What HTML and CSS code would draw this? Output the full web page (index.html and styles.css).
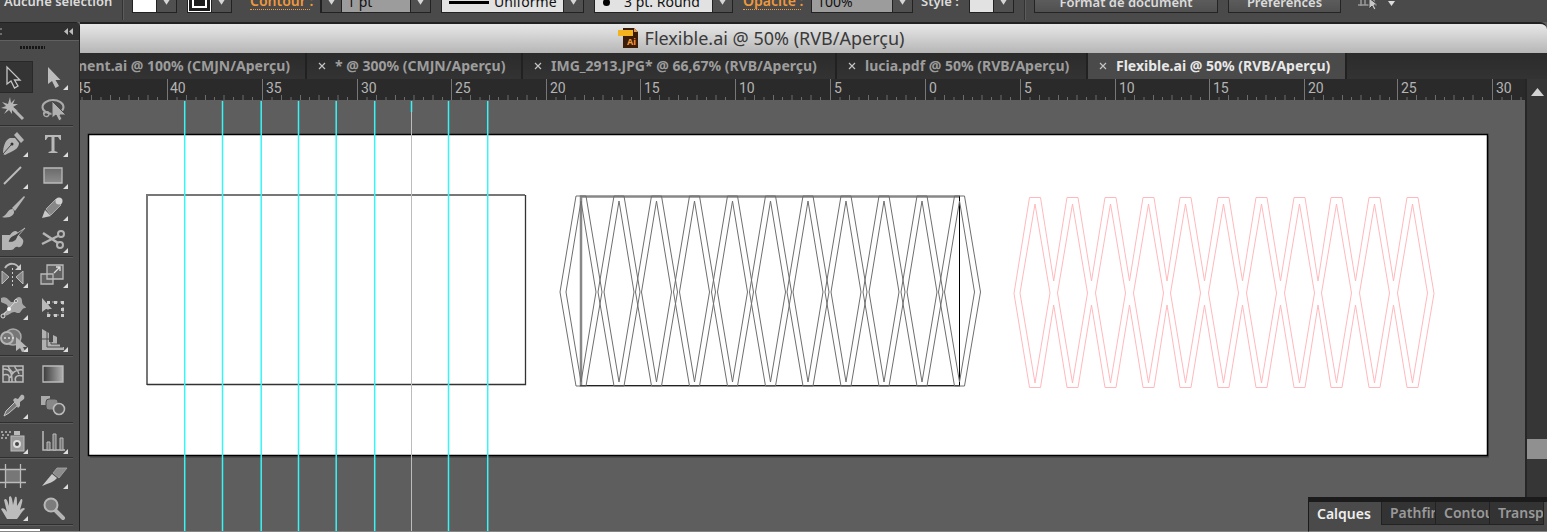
FILE: index.html
```html
<!DOCTYPE html>
<html lang="fr">
<head>
<meta charset="utf-8">
<title>Flexible.ai @ 50% (RVB/Aperçu)</title>
<link rel="stylesheet" href="styles.css">
</head>
<body>
<svg class="defs" aria-hidden="true">
  <defs>
    <linearGradient id="metal" x1="0" y1="0" x2="0" y2="1"><stop offset="0" stop-color="#6a6a6a"/><stop offset="1" stop-color="#8c8c8c"/></linearGradient>
    <linearGradient id="fade"><stop offset="0" stop-color="#3a3a3a"/><stop offset="1" stop-color="#b0b0b0"/></linearGradient>
    <symbol id="down" viewBox="0 0 8 6"><path d="M0 0h8L4 6z" fill="#d6d6d6"/></symbol>
    <symbol id="close" viewBox="0 0 8 8"><path d="M1 1l6 6M7 1L1 7" stroke="#c4c4c4" stroke-width="1.2"/></symbol>
    <path id="more" d="M35 24v5h-5z" fill="#ddd"/>
    <g id="diamond">
      <path d="M-5 -96H5L21 0L5 94H-5L-21 0Z"/>
      <path d="M0 -91L15 0L0 90L-15 0Z"/>
    </g>
    <path id="hole" d="M0 -89L15 0L0 90L-15 0Z"/>
    <g id="segment" stroke="#6c6c6c">
      <path d="M.5 0V21" stroke="#777"/>
      <path d="M10 18v3M19.500 16v5M29 18v3M38.500 16v5M47.500 18v3M57 16v5M66.500 18v3M76 16v5M85.500 18v3"/>
    </g>
  </defs>
</svg>
<div class="app">
  <header class="options">
    <span class="caption selection">Aucune sélection</span>
    <i class="rule"></i>
    <button class="swatch" aria-label="Fond"><span class="chip white"></span><svg class="arrow"><use href="#down"/></svg></button>
    <button class="swatch" aria-label="Contour"><span class="chip stroke"><i></i></span><svg class="arrow"><use href="#down"/></svg></button>
    <a class="link contour" href="#contour">Contour :</a>
    <div class="combo weight"><button class="step" aria-label="Diminuer"><svg class="arrow"><use href="#down"/></svg></button><select aria-label="Épaisseur"><option>1 pt</option></select><svg class="arrow"><use href="#down"/></svg></div>
    <div class="combo profile"><i class="bar"></i><select aria-label="Profil"><option>Uniforme</option></select><svg class="arrow"><use href="#down"/></svg></div>
    <div class="combo brush"><i class="dot"></i><select aria-label="Forme"><option>3 pt. Round</option></select><svg class="arrow"><use href="#down"/></svg></div>
    <a class="link opacity" href="#opacite">Opacité :</a>
    <div class="combo percent"><select aria-label="Opacité"><option>100%</option></select><svg class="arrow"><use href="#down"/></svg></div>
    <span class="caption style">Style :</span>
    <button class="swatch" aria-label="Style"><span class="chip pale"></span><svg class="arrow"><use href="#down"/></svg></button>
    <i class="rule"></i>
    <button class="push format">Format de document</button>
    <button class="push prefs">Préférences</button>
    <button class="similar" aria-label="Objets similaires"><svg width="50" height="22" viewBox="0 0 50 22"><path d="M10 3v12M14 8v6h9V8M7 14h19" fill="none" stroke="#999" stroke-width="1.500"/><path d="M18 7v11l3-3 2 4 2-1-2-4h4z" fill="#c8c8c8" stroke="#444"/><path d="M37 10h7l-3.500 5z" fill="#ddd"/></svg></button>
  </header>

  <div class="work">
    <aside class="tools">
      <div class="tools-head"><svg width="80" height="17"><path d="M0 6h2M0 11h2" stroke="#aaa"/><path d="M68 5v7l-4-3.500zM73 5v7l-4-3.500z" fill="#bbb"/></svg></div>
      <div class="grip"></div>
      <div class="group">
        <button aria-label="Sélection" class="on"><svg viewBox="0 0 40 32"><path d="M14 6V23l4-3 3.500 7 3.500-2-3.500-6h5.500z" fill="#333" stroke="#c4c4c4" stroke-width="1.300"/></svg></button>
        <button aria-label="Sélection directe"><svg viewBox="0 0 40 32"><path d="M15 6v17l4-3 3.500 7 3.500-2-3.500-6h5z" fill="#bcbcbc"/><use href="#more"/></svg></button>
        <button aria-label="Baguette magique"><svg viewBox="0 0 40 32"><path d="M17 4l1 6 4-4-2 5 5 0-5 3 5 4-6-2 0 5-3-4-5 4 3-5-6-1 5-2-4-4 6 2z" fill="#b5b5b5"/><path d="M19 15l11 11" stroke="#b5b5b5" stroke-width="3"/></svg></button>
        <button aria-label="Lasso"><svg viewBox="0 0 40 32"><ellipse cx="20" cy="14" rx="10.500" ry="7" fill="none" stroke="#aaa" stroke-width="2"/><path d="M19 8v17l4-3 3 6 3-2-2-4h6z" fill="#b0b0b0" stroke="#4a4a4a"/><path d="M11 19c-2 5 5 6 5 2s-4-2-5 0" fill="none" stroke="#aaa" stroke-width="1.500"/></svg></button>
      </div>
      <div class="group">
        <button aria-label="Plume"><svg viewBox="0 0 40 32"><path d="M10 26c0-7 2-14 7-16l5 0 4 5c0 6-6 8-14 12z" fill="#b4b4b4"/><path d="M21 7l3-3 7 8-3 3z" fill="#b4b4b4"/><path d="M10 26l8-9" stroke="#444"/><circle cx="19" cy="16" r="1.500" fill="#333"/><use href="#more"/></svg></button>
        <button aria-label="Texte"><svg viewBox="0 0 40 32"><path d="M12 7h16v5h-1l-2-3h-3.500v14l3 1v1h-9v-1l3-1V9H15l-2 3h-1z" fill="#b8b8b8"/><use href="#more"/></svg></button>
        <button aria-label="Trait"><svg viewBox="0 0 40 32"><path d="M11 24L28 7" stroke="#bbb" stroke-width="2"/><use href="#more"/></svg></button>
        <button aria-label="Rectangle"><svg viewBox="0 0 40 32"><path d="M11 8h18v15H11z" fill="url(#metal)" stroke="#bbb" stroke-width="1.300"/><use href="#more"/></svg></button>
        <button aria-label="Pinceau"><svg viewBox="0 0 40 32"><path d="M19 16L31 4l1 1-10 14z" fill="#b4b4b4"/><path d="M20 17c4 6-4 10-11 8 5-1 5-8 11-8z" fill="#b4b4b4"/></svg></button>
        <button aria-label="Crayon"><svg viewBox="0 0 40 32"><path d="M9 26l3-8 6 6z" fill="#c9c9c9"/><path d="M13 17l10-10 5 6-10 10z" fill="#888" stroke="#aaa"/><circle cx="26" cy="9" r="3.500" fill="#d0d0d0"/><use href="#more"/></svg></button>
        <button aria-label="Forme de tache"><svg viewBox="0 0 40 32"><path d="M9 11h8c3-5 7-5 8-2 0 4 7 5 5 10-1 4-4 5-5 4-4-1-3 3-7 3H9z" fill="#b4b4b4"/><path d="M15 18c2-6 5-6 8-8l9-6-7 8c-2 6-6 7-10 6z" fill="#444" stroke="#c4c4c4" stroke-width=".8"/></svg></button>
        <button aria-label="Ciseaux"><svg viewBox="0 0 40 32"><circle cx="28" cy="10" r="3" fill="none" stroke="#b4b4b4" stroke-width="2"/><circle cx="27" cy="21" r="3" fill="none" stroke="#b4b4b4" stroke-width="2"/><path d="M10 9l15 10M9 20l16-8" stroke="#b4b4b4" stroke-width="2.500"/><use href="#more"/></svg></button>
      </div>
      <div class="group">
        <button aria-label="Miroir"><svg viewBox="0 0 40 32"><path d="M9 12l7 6-7 7zM30 12l-7 6 7 7z" fill="#858585" stroke="#bbb"/><path d="M19.500 9v18" stroke="#ccc" stroke-dasharray="2 2"/><path d="M12 9c4-6 11-5 14 0" fill="none" stroke="#bbb" stroke-width="2"/><path d="M28 5v6h-6z" fill="#ccc"/><use href="#more"/></svg></button>
        <button aria-label="Échelle"><svg viewBox="0 0 40 32"><path d="M14 6h16v14H14zM8 15h12v10H8z" fill="#777" fill-opacity=".5" stroke="#bbb" stroke-width="1.300"/><path d="M21 14l6-6M23 8h4v4" fill="none" stroke="#ddd" stroke-width="1.300"/><use href="#more"/></svg></button>
        <button aria-label="Largeur"><svg viewBox="0 0 40 32"><path d="M8 7c8-4 9 9 14 2 3-5 7-3 7 1 0 5 3 4 4 7-5-1-4 6-9 5-6-4-8 6-14 1 2-3 5-2 5-6s-3-4-7-6z" fill="#a6a6a6"/><path d="M9 25L23 10" stroke="#ddd"/><circle cx="10" cy="25" r="2" fill="#555" stroke="#ddd"/><circle cx="16" cy="18" r="2" fill="#fff"/><circle cx="23" cy="10" r="1.500" fill="#555" stroke="#ddd"/><use href="#more"/></svg></button>
        <button aria-label="Transformation"><svg viewBox="0 0 40 32"><path d="M15 11h15v13H15z" fill="none" stroke="#aaa" stroke-dasharray="2 2"/><path d="M14 10h3v3h-3zM21 10h3v3h-3zM28 10h3v3h-3zM28 17h3v3h-3zM28 23h3v3h-3zM21 23h3v3h-3zM14 23h3v3h-3z" fill="#ccc"/><path d="M9 7v14l4-3h6z" fill="#b8b8b8"/></svg></button>
        <button aria-label="Concepteur de forme"><svg viewBox="0 0 40 32"><circle cx="20" cy="14" r="8" fill="#777" stroke="#aaa" stroke-width="1.500"/><circle cx="14" cy="15" r="6" fill="#777" stroke="#b4b4b4" stroke-width="2"/><path d="M11 15h11" stroke="#ddd" stroke-width="1.500" stroke-dasharray="2 2"/><path d="M23 14v14l4-3 2 4 3-1-2-4h4z" fill="#b8b8b8"/><use href="#more"/></svg></button>
        <button aria-label="Grille de perspective"><svg viewBox="0 0 40 32"><path d="M9 6l7 4v9h4v-7l4 2v7h3v3h4v3H9z" fill="#b0b0b0"/><path d="M14 8v16h16M18 10v11h10M9 16h11" stroke="#4a4a4a" fill="none"/><use href="#more"/></svg></button>
      </div>
      <div class="group">
        <button aria-label="Filet"><svg viewBox="0 0 40 32"><path d="M10 8h20v16H10z" fill="#555" stroke="#bbb" stroke-width="1.500"/><path d="M10 11c9 0 9 6 9 13M10 17c8-2 6 3 6 7M30 12c-9-1-11 4-13 8M30 18c-7-2-9 2-7 6M15 8c1 4 4 5 5 7M22 8c-1 3 3 3 4 8" fill="none" stroke="#bbb" stroke-width="1.500"/></svg></button>
        <button aria-label="Dégradé de couleurs"><svg viewBox="0 0 40 32"><path d="M10 8h20v16H10z" fill="url(#fade)" stroke="#bbb" stroke-width="1.300"/></svg></button>
        <button aria-label="Pipette"><svg viewBox="0 0 40 32"><path d="M11 26l2-5 9-9 3 3-9 8z" fill="#777" stroke="#c4c4c4"/><path d="M20 10l2-2 3 1 3-4c3-1 4 2 3 4l-4 3 0 4-2 2z" fill="#b4b4b4"/><use href="#more"/></svg></button>
        <button aria-label="Dégradé de formes"><svg viewBox="0 0 40 32"><path d="M8 6h9v9H8z" fill="#aaa"/><rect x="13" y="9" width="12" height="11" rx="3" fill="#888" stroke="#4a4a4a"/><circle cx="26" cy="19" r="5.500" fill="#5a5a5a" stroke="#bbb" stroke-width="1.600"/></svg></button>
      </div>
      <div class="group">
        <button aria-label="Pulvérisation"><svg viewBox="0 0 40 32"><path d="M8 7h2M12 7h2M16 7h2M9 10h2M14 10h2M8 13h2M12 13h2" stroke="#bbb" stroke-width="1.500"/><path d="M21 6h6v4h-6z" fill="#bbb"/><rect x="18" y="11" width="13" height="15" fill="#999" stroke="#bbb"/><circle cx="24" cy="19" r="3" fill="#444" stroke="#ddd" stroke-width="2"/><use href="#more"/></svg></button>
        <button aria-label="Graphe"><svg viewBox="0 0 40 32"><path d="M10 6v19h22" fill="none" stroke="#bbb" stroke-width="1.500"/><path d="M14 17h3v8h-3zM20 9h3v16h-3zM27 13h3v12h-3z" fill="#777" stroke="#bbb"/><use href="#more"/></svg></button>
      </div>
      <div class="group">
        <button aria-label="Plan de travail"><svg viewBox="0 0 40 32"><path d="M12 10h16v12H12z" fill="#777"/><path d="M12.500 4v24M27.500 4v24M6 9.500h27M6 22.500h27" stroke="#bbb" stroke-width="1.300"/></svg></button>
        <button aria-label="Tranche"><svg viewBox="0 0 40 32"><path d="M9 26L19 14l5 4c-3 4-8 5-15 8z" fill="#cacaca"/><path d="M20 13l4-5h10l-8 10z" fill="#8c8c8c" stroke="#a8a8a8" stroke-width=".8"/><use href="#more"/></svg></button>
        <button aria-label="Main"><svg viewBox="0 0 40 32"><path d="M14 27l-6-10c2-2 4 0 6 3L11 8c2-2 3-1 5 6L16 5c2-2 3 0 4 8l2-8c2-1 2 0 2 9l4-7c2 0 2 1-1 11 2-2 4-3 5-1-4 3-5 7-8 10z" fill="#bcbcbc"/><use href="#more"/></svg></button>
        <button aria-label="Zoom"><svg viewBox="0 0 40 32"><path d="M22 18l8 8" stroke="#b4b4b4" stroke-width="4" stroke-linecap="round"/><circle cx="18" cy="13" r="6.500" fill="#7c7c7c" stroke="#b8b8b8" stroke-width="2"/></svg></button>
      </div>
      <div class="fill"></div>
    </aside>

    <main class="document">
      <h1 class="title"><svg width="20" height="20" viewBox="0 0 20 20"><path d="M5 0h11l4 4v16H5z" fill="#3c1c08"/><path d="M16 0l4 4h-4z" fill="#e09a50"/><path d="M0 2h15v6H0z" fill="#f4b21f"/><text x="9" y="17" class="badge">Ai</text></svg>Flexible.ai @ 50% (RVB/Aperçu)</h1>
      <nav class="tabs">
        <div class="tab first"><a href="#t1">ment.ai @ 100% (CMJN/Aperçu)</a></div>
        <div class="tab second"><button aria-label="Fermer"><svg><use href="#close"/></svg></button><a href="#t2">* @ 300% (CMJN/Aperçu)</a></div>
        <div class="tab third"><button aria-label="Fermer"><svg><use href="#close"/></svg></button><a href="#t3">IMG_2913.JPG* @ 66,67% (RVB/Aperçu)</a></div>
        <div class="tab fourth"><button aria-label="Fermer"><svg><use href="#close"/></svg></button><a href="#t4">lucia.pdf @ 50% (RVB/Aperçu)</a></div>
        <div class="tab fifth active"><button aria-label="Fermer"><svg><use href="#close"/></svg></button><a href="#t5">Flexible.ai @ 50% (RVB/Aperçu)</a></div>
      </nav>
      <div class="view">
        <div class="page">
          <svg class="ruler">
            <use href="#segment" x="-8"/><use href="#segment" x="87"/><use href="#segment" x="182"/><use href="#segment" x="277"/><use href="#segment" x="371"/><use href="#segment" x="466"/><use href="#segment" x="560"/><use href="#segment" x="655"/><use href="#segment" x="750"/><use href="#segment" x="845"/><use href="#segment" x="940"/><use href="#segment" x="1035"/><use href="#segment" x="1129"/><use href="#segment" x="1224"/><use href="#segment" x="1317"/><use href="#segment" x="1412"/>
            <g class="numbers"><text x="-5" y="14">45</text><text x="90" y="14">40</text><text x="186" y="14">35</text><text x="281" y="14">30</text><text x="375" y="14">25</text><text x="470" y="14">20</text><text x="564" y="14">15</text><text x="659" y="14">10</text><text x="754" y="14">5</text><text x="849" y="14">0</text><text x="944" y="14">5</text><text x="1039" y="14">10</text><text x="1133" y="14">15</text><text x="1228" y="14">20</text><text x="1321" y="14">25</text><text x="1416" y="14">30</text></g>
          </svg>
          <svg class="canvas">
            <path d="M10 36H1409V358H10z" fill="#4c4c4c"/>
            <path d="M8.500 34.500H1407.500V355.500H8.500z" fill="#fff" stroke="#000" stroke-width="1.500"/>
            <g fill="none">
              <path d="M67 285V95H445" stroke="#777" stroke-width="2"/>
              <path d="M67 284.500H445.500V95" stroke="#333" stroke-width="1.300"/>
              <path d="M501 287V96.500H880" stroke="#888" stroke-width="2.500"/>
              <path d="M500 285.500H880" stroke="#222"/><path d="M500 286.500H880" stroke="#aaa"/>
              <path d="M879.500 96V286" stroke="#000"/>
              <g stroke="#6e6e6e"><use href="#diamond" x="501" y="192"/><use href="#diamond" x="539" y="192"/><use href="#diamond" x="576.500" y="192"/><use href="#diamond" x="614.500" y="192"/><use href="#diamond" x="652.500" y="192"/><use href="#diamond" x="690.500" y="192"/><use href="#diamond" x="728" y="192"/><use href="#diamond" x="766" y="192"/><use href="#diamond" x="804" y="192"/><use href="#diamond" x="842" y="192"/><use href="#diamond" x="879.500" y="192"/></g>
              <g stroke="#ffb9bd">
                <path d="M934 193.500L949.500 97.500h11L973.700 181L987 97.500h11L1011.500 181L1025 97.500h11L1049.500 181L1063 97.500h11L1087 181L1100 97.500h11L1124.500 181L1138 97.500h11L1162.500 181L1176 97.500h11L1200.500 181L1214 97.500h11L1238 181L1251 97.500h11L1275.500 181L1289 97.500h11L1313.500 181L1327 97.500h11L1354 193.500"/>
                <path d="M934 193.500L949.500 287.500h11L973.700 205L987 287.500h11L1011.500 205L1025 287.500h11L1049.500 205L1063 287.500h11L1087 205L1100 287.500h11L1124.500 205L1138 287.500h11L1162.500 205L1176 287.500h11L1200.500 205L1214 287.500h11L1238 205L1251 287.500h11L1275.500 205L1289 287.500h11L1313.500 205L1327 287.500h11L1354 193.500"/>
                <use href="#hole" x="955" y="193"/><use href="#hole" x="992.500" y="193"/><use href="#hole" x="1030.500" y="193"/><use href="#hole" x="1068.500" y="193"/><use href="#hole" x="1105.500" y="193"/><use href="#hole" x="1143.500" y="193"/><use href="#hole" x="1181.500" y="193"/><use href="#hole" x="1219.500" y="193"/><use href="#hole" x="1256.500" y="193"/><use href="#hole" x="1294.500" y="193"/><use href="#hole" x="1332.500" y="193"/>
              </g>
              <g stroke="#39f4f4" stroke-width="1.500"><path d="M104.700 1V440M142.500 1V440M181.200 1V440M218.500 1V440M256.200 1V440M294.700 1V440M368.500 1V440M407.700 1V440M331.500 1V12"/></g>
              <path d="M331.500 12V440" stroke="#bcbcbc"/>
            </g>
          </svg>
        </div>
        <div class="scroll"><svg width="21" height="20"><path d="M4 17h13l-6.500-8z" fill="#d4d4d4"/></svg><i class="thumb"></i></div>
      </div>
    </main>
  </div>

  <section class="dock">
    <button class="current">Calques</button><button>Pathfinder</button><button>Contour</button><button>Transparence</button>
  </section>
</div>
</body>
</html>
```
FILE: styles.css
```css
* { box-sizing: border-box; }
body { margin: 0; font-family: "Noto Sans", sans-serif; background: #5e5e5e; }
button, select { margin: 0; padding: 0; border: 0; border-radius: 0; background: none; color: inherit; font: inherit; }
a { color: inherit; text-decoration: none; }
.defs { position: absolute; width: 0; height: 0; }
.app { position: relative; display: flex; flex-direction: column; height: 100vh; overflow: hidden; }

.options { display: flex; flex: none; align-items: center; gap: 10px; height: 22px; padding: 0 4px; overflow: hidden; background: #4a4a4a; color: #dcdcdc; font-size: 14px; white-space: nowrap; }
.options > * { flex: none; height: 22px; margin-top: -18px; line-height: 20px; }
.selection { width: 108px; }
.caption { font-size: 13px; font-weight: 600; }
.style { width: 38px; margin-left: -2px; }
.options .rule { width: 2px; height: 30px; margin-top: -12px; margin-right: -2px; border-left: 1px solid #333; border-right: 1px solid #5c5c5c; }
.swatch { display: flex; width: 45px; border: 1px solid #222; }
.chip { flex: 1; height: 20px; }
.white { background: #fff; }
.pale { background: #e2e2e2; }
.stroke { padding: 3px; border: 1px solid #fff; background: #1c1c1c; }
.stroke i { display: block; height: 12px; border: 2px solid #fff; }
.arrow { flex: none; width: 20px; height: 20px; padding: 7px 6px; border-left: 1px solid #222; background: #505050; }
.link { color: #f0993c; font-weight: 600; }
.options .link { height: 19px; margin-top: -21px; border-bottom: 1px dotted #f0993c; }
.contour { width: 60px; margin-left: 8px; }
.opacity { width: 58px; }
.combo { display: flex; border: 1px solid #222; background: #9c9c9c; color: #111; }
.combo select { flex: 1; width: 0; height: 20px; padding-left: 5px; appearance: none; }
.weight { width: 111px; }
.step { display: flex; border-right: 1px solid #222; }
.profile { width: 143px; background: #e2e2e2; }
.bar { width: 40px; height: 3px; margin: 9px 0 0 7px; background: #000; }
.brush { width: 139px; background: #e2e2e2; }
.brush select { padding-left: 14px; }
.dot { width: 7px; height: 7px; margin: 7px 0 0 8px; border-radius: 50%; background: #000; }
.percent { width: 102px; }
.push { border: 1px solid #242424; background: linear-gradient(#646464, #505050); font-size: 13px; font-weight: 600; }
.format { width: 184px; }
.prefs { width: 113px; }

.work { display: flex; flex: 1; min-height: 0; border-bottom: 1px solid #858585; }
.tools { flex: none; width: 80px; overflow: hidden; border-right: 1px solid #222; border-top-right-radius: 5px; background: #4a4a4a; }
.tools-head { height: 18px; border-top: 1px solid #222; background: #303030; }
.tools-head svg { display: block; }
.grip { height: 20px; border-top: 1px solid #606060; }
.grip::before { content: ""; display: block; width: 25px; height: 3px; margin: 5px 0 0 20px; background: repeating-linear-gradient(90deg, #161616 0 2px, #4a4a4a 2px 3px); }
.group { display: grid; grid-template-columns: 40px 40px; width: 80px; margin-left: -7px; padding-top: 1px; border-bottom: 1px solid #2f2f2f; box-shadow: 0 1px #5c5c5c; margin-bottom: 1px; }
.group button, .group svg { display: block; width: 40px; height: 32px; }
.group .on { background: #343434; border: 1px solid #292929; }
.group .on svg { margin: -1px; }
.fill { width: 40px; height: 8px; margin-top: 4px; background: #fff; }

.document { display: flex; flex: 1; flex-direction: column; min-width: 0; background: #5e5e5e; }
.title { display: flex; flex: none; align-items: center; justify-content: center; gap: 7px; height: 31px; margin: 0; padding: 0 105px 2px 0; border-top: 2px solid #222; border-top-right-radius: 7px; background: linear-gradient(#e8e8e8, #b6b6b6); color: #3a3a3a; font-size: 18px; font-weight: 400; line-height: 28px; }
.badge { fill: #f2993c; font-size: 9px; font-weight: 700; }
.tabs { display: flex; flex: none; height: 26px; background: linear-gradient(#2b2b2b, #333); color: #9d9d9d; font-size: 14px; font-weight: 700; line-height: 28px; white-space: nowrap; }
.tab { display: flex; flex: none; align-items: center; gap: 9px; padding-left: 11px; border-right: 2px solid #212121; overflow: hidden; }
.tab button, .tab svg { display: block; width: 8px; height: 8px; }
.first { width: 227px; justify-content: flex-end; padding: 0 15px 0 0; }
.second { width: 216px; }
.third { width: 314px; }
.fourth { width: 251px; }
.fifth { width: 259px; }
.active { background: #4a4a4a; color: #e8e8e8; }

.view { display: flex; flex: 1; min-height: 0; }
.page { display: flex; flex: 1; flex-direction: column; min-width: 0; }
.ruler { flex: none; width: 100%; height: 21px; background: #2a2a2a; }
.numbers { fill: #b4b4b4; font: 14px Roboto, sans-serif; }
.canvas { flex: 1; width: 100%; min-height: 0; }
.scroll { display: flex; flex: none; flex-direction: column; width: 22px; border-left: 2px solid #262626; background: #363636; }
.thumb { height: 20px; margin-top: 340px; background: #909090; }

.dock { position: absolute; right: 0; bottom: 0; display: flex; align-items: flex-start; width: 239px; height: 35px; border-top: 5px solid #1b1b1b; border-left: 1px solid #1b1b1b; border-bottom: 1px solid #858585; background: #4a4a4a; color: #999; font-size: 14px; font-weight: 600; }
.dock button { flex: none; width: 54px; height: 23px; padding-left: 8px; overflow: hidden; border-right: 1px solid #222; border-bottom: 1px solid #222; background: #333; line-height: 20px; text-align: left; white-space: nowrap; }
.dock .current { width: 73px; border-bottom: 0; background: #4a4a4a; color: #eee; }
```
